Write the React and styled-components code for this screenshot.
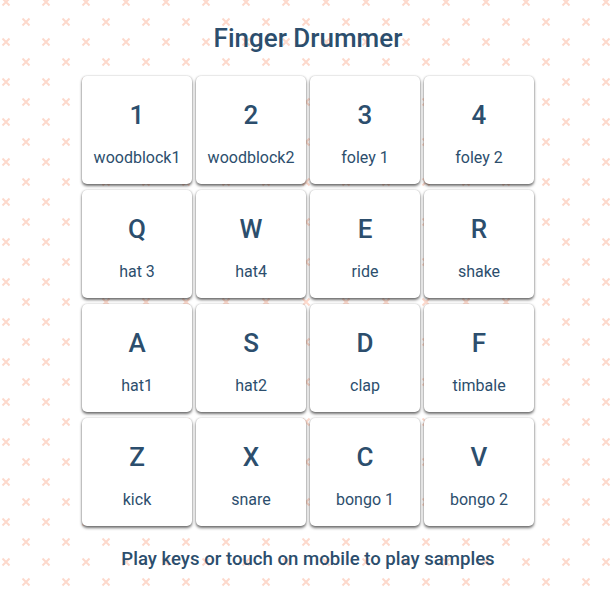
import React from "react";
import styled, { createGlobalStyle } from "styled-components";

const cross =
  "data:image/svg+xml," +
  encodeURIComponent(
    `<svg xmlns="http://www.w3.org/2000/svg" width="40" height="40"><g stroke="#fdd9cc" stroke-width="2"><path d="M6.5 6.5l7 7M13.5 6.5l-7 7"/><path d="M26.5 26.5l7 7M33.5 26.5l-7 7"/></g></svg>`
  );

const GlobalStyle = createGlobalStyle`
  html, body {
    margin: 0;
    padding: 0;
    background-color: #ffffff;
    background-image: url("${cross}");
    background-position: -4px -8px;
    font-family: Roboto, "Liberation Sans", sans-serif;
    color: #2c4e6d;
  }
`;

const Page = styled.div`
  padding-left: 4px;
  display: flex;
  flex-direction: column;
  align-items: center;
`;

const Title = styled.h1`
  margin: 23px 0 0;
  font-size: 26px;
  line-height: 30px;
  font-weight: 500;
`;

const Pads = styled.div`
  margin-top: 23px;
  display: grid;
  grid-template-columns: repeat(4, 110px);
  grid-auto-rows: 108px;
  gap: 6px 4px;
`;

const Pad = styled.div`
  background: #ffffff;
  border-radius: 5px;
  box-shadow: 0 2px 3px rgba(0, 0, 0, 0.55), 0 0 2px rgba(0, 0, 0, 0.25);
  display: flex;
  flex-direction: column;
  align-items: center;
  cursor: pointer;
`;

const Key = styled.div`
  margin-top: 24px;
  font-size: 26px;
  line-height: 30px;
  font-weight: 500;
`;

const Sample = styled.div`
  margin-top: 18px;
  font-size: 16px;
  line-height: 20px;
`;

const Hint = styled.p`
  margin: 21px 0 0;
  font-size: 18.6px;
  line-height: 24px;
  font-weight: 500;
`;

const pads = [
  ["1", "woodblock1"],
  ["2", "woodblock2"],
  ["3", "foley 1"],
  ["4", "foley 2"],
  ["Q", "hat 3"],
  ["W", "hat4"],
  ["E", "ride"],
  ["R", "shake"],
  ["A", "hat1"],
  ["S", "hat2"],
  ["D", "clap"],
  ["F", "timbale"],
  ["Z", "kick"],
  ["X", "snare"],
  ["C", "bongo 1"],
  ["V", "bongo 2"],
];

const App = () => {
  return (
    <>
      <GlobalStyle />
      <Page>
        <Title>Finger Drummer</Title>
        <Pads>
          {pads.map(([key, name]) => (
            <Pad key={key}>
              <Key>{key}</Key>
              <Sample>{name}</Sample>
            </Pad>
          ))}
        </Pads>
        <Hint>Play keys or touch on mobile to play samples</Hint>
      </Page>
    </>
  );
};

export default App;
